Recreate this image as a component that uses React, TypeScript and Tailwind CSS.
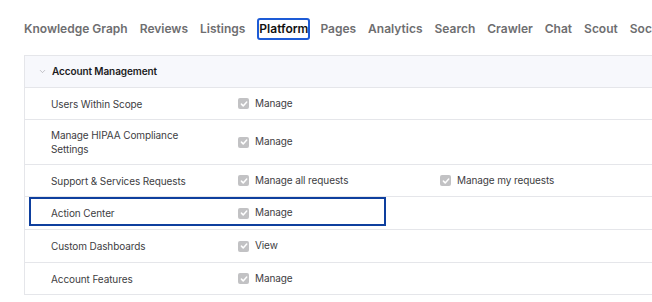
import { ChevronDown } from 'lucide-react'

const tabs = ['Knowledge Graph', 'Reviews', 'Listings', 'Platform', 'Pages', 'Analytics', 'Search', 'Crawler', 'Chat', 'Scout', 'Social']

const rows = [
  { name: 'Users Within Scope', perms: ['Manage'], height: 'h-[32px]' },
  { name: 'Manage HIPAA Compliance Settings', perms: ['Manage'], height: 'h-[45px]' },
  { name: 'Support & Services Requests', perms: ['Manage all requests', 'Manage my requests'], height: 'h-[32px]' },
  { name: 'Action Center', perms: ['Manage'], height: 'h-[33px]', focused: true },
  { name: 'Custom Dashboards', perms: ['View'], height: 'h-[33px]' },
  { name: 'Account Features', perms: ['Manage'], height: 'h-[32px]' },
]

function CheckedBox({ label }: { label: string }) {
  return (
    <div className="flex items-center gap-[6px]">
      <span className="flex h-[11px] w-[11px] items-center justify-center rounded-[2px] bg-[#c2c2c4]">
        <svg width="8" height="8" viewBox="0 0 8 8" fill="none">
          <path d="M1.4 4.1 3.2 5.9 6.7 2.1" stroke="white" strokeWidth="1.5" strokeLinecap="round" strokeLinejoin="round" />
        </svg>
      </span>
      <span className="-mt-[2px] text-[10px] leading-none tracking-[-0.1px] text-[#3d3d3f]">{label}</span>
    </div>
  )
}

export default function App() {
  return (
    <div className="h-[302px] w-[652px] overflow-hidden bg-white font-['Inter','Liberation_Sans',sans-serif]">
      <nav className="flex items-center gap-[12px] whitespace-nowrap pt-[18px] pl-[24px]">
        {tabs.map((tab) =>
          tab === 'Platform' ? (
            <span
              key={tab}
              className="-mr-[2px] rounded-[3px] border-2 border-[#1d5bd6] text-[12px] leading-[18px] font-semibold text-[#111]"
            >
              {tab}
            </span>
          ) : (
            <span key={tab} className="py-[2px] text-[12px] leading-[18px] font-semibold text-[#6e6e70]">
              {tab}
            </span>
          ),
        )}
      </nav>

      <div className="mt-[15px] ml-[24px] w-[700px] border-t border-l border-[#e5e6ea]">
        <div className="flex h-[32px] items-center border-b border-[#e5e6ea] bg-[#f7f8fc] pl-[13px]">
          <ChevronDown size={9} strokeWidth={1.5} className="text-[#9a9a9e]" />
          <span className="ml-[5px] text-[10px] font-semibold tracking-[-0.1px] text-[#1b1b1d]">Account Management</span>
        </div>

        {rows.map((row) => (
          <div key={row.name} className={`relative flex items-center border-b border-[#e5e6ea] ${row.height}`}>
            <div className="w-[213px] pl-[26px]">
              <span className="block max-w-[150px] text-[10px] leading-[14px] tracking-[-0.1px] text-[#3d3d3f]">
                {row.name}
              </span>
            </div>
            {row.perms.map((perm) => (
              <div key={perm} className="w-[202px]">
                <CheckedBox label={perm} />
              </div>
            ))}
            {row.focused ? (
              <div className="absolute top-0 left-[4px] h-[29px] w-[357px] border-2 border-[#0e3f9e]" />
            ) : null}
          </div>
        ))}
      </div>
    </div>
  )
}
